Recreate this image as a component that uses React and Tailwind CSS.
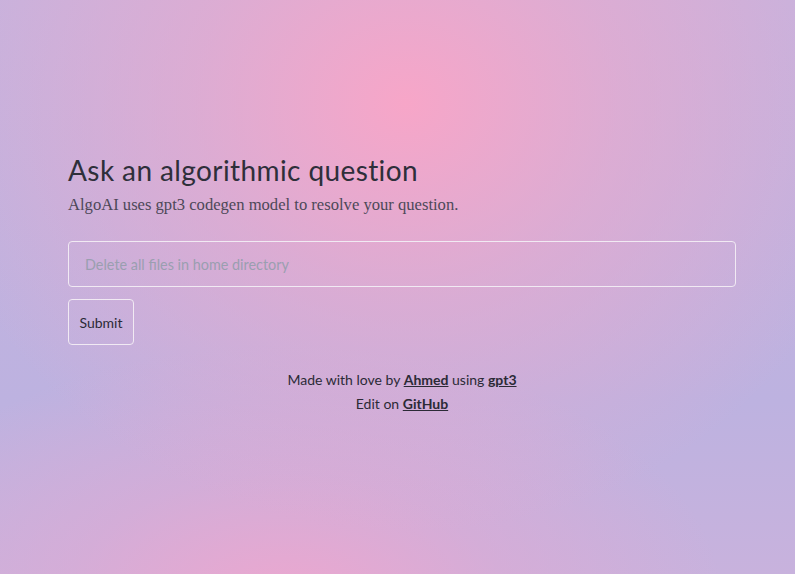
import React, { useState } from 'react';

const App = () => {
  const [question, setQuestion] = useState('');

  return (
    <div className="min-h-[574px] w-full bg-[radial-gradient(ellipse_60%_75%_at_51%_18%,#f7a6c8_0%,rgba(236,168,204,0.6)_45%,rgba(200,180,222,0)_100%),radial-gradient(ellipse_55%_45%_at_36%_105%,#eca7cf_0%,rgba(226,168,210,0.5)_50%,rgba(200,180,222,0)_100%),linear-gradient(180deg,#c5b3de_0%,#bdb2e0_70%,#c8b2dd_100%)] font-['Lato','Noto_Sans',sans-serif] text-[#2d2c38]">
      <div className="ml-[68px] w-[668px] pt-[153px]">
        {/* Heading */}
        <h1 className="text-[28px] leading-[34px] tracking-[0.4px] text-[#2e2f3a]">
          Ask an algorithmic question
        </h1>
        <p className="mt-[6px] font-['Liberation_Serif',serif] text-[16.6px] leading-[24px] text-[#4d4858]">
          AlgoAI uses gpt3 codegen model to resolve your question.
        </p>

        {/* Form */}
        <form className="mt-[24px]" onSubmit={(e) => e.preventDefault()}>
          <input
            value={question}
            onChange={(e) => setQuestion(e.target.value)}
            placeholder="Delete all files in home directory"
            className="h-[46px] w-full rounded-[4px] border border-[#f1eaf3] bg-transparent px-[16px] text-[14.4px] text-[#2d2c38] outline-none placeholder:text-[#9a9fb0]"
          />
          <button
            type="submit"
            className="mt-[12px] h-[46px] w-[66px] rounded-[4px] border border-[#f1eaf3] bg-transparent text-[14px] text-[#2b2a36]"
          >
            Submit
          </button>
        </form>

        {/* Footer */}
        <div className="mt-[23px] text-center text-[14px] leading-[24px] text-[#2b2a36]">
          <p>
            Made with love by <a href="#" className="font-bold underline">Ahmed</a> using{' '}
            <a href="#" className="font-bold underline">gpt3</a>
          </p>
          <p>
            Edit on <a href="#" className="font-bold underline">GitHub</a>
          </p>
        </div>
      </div>
    </div>
  );
};

export default App;
